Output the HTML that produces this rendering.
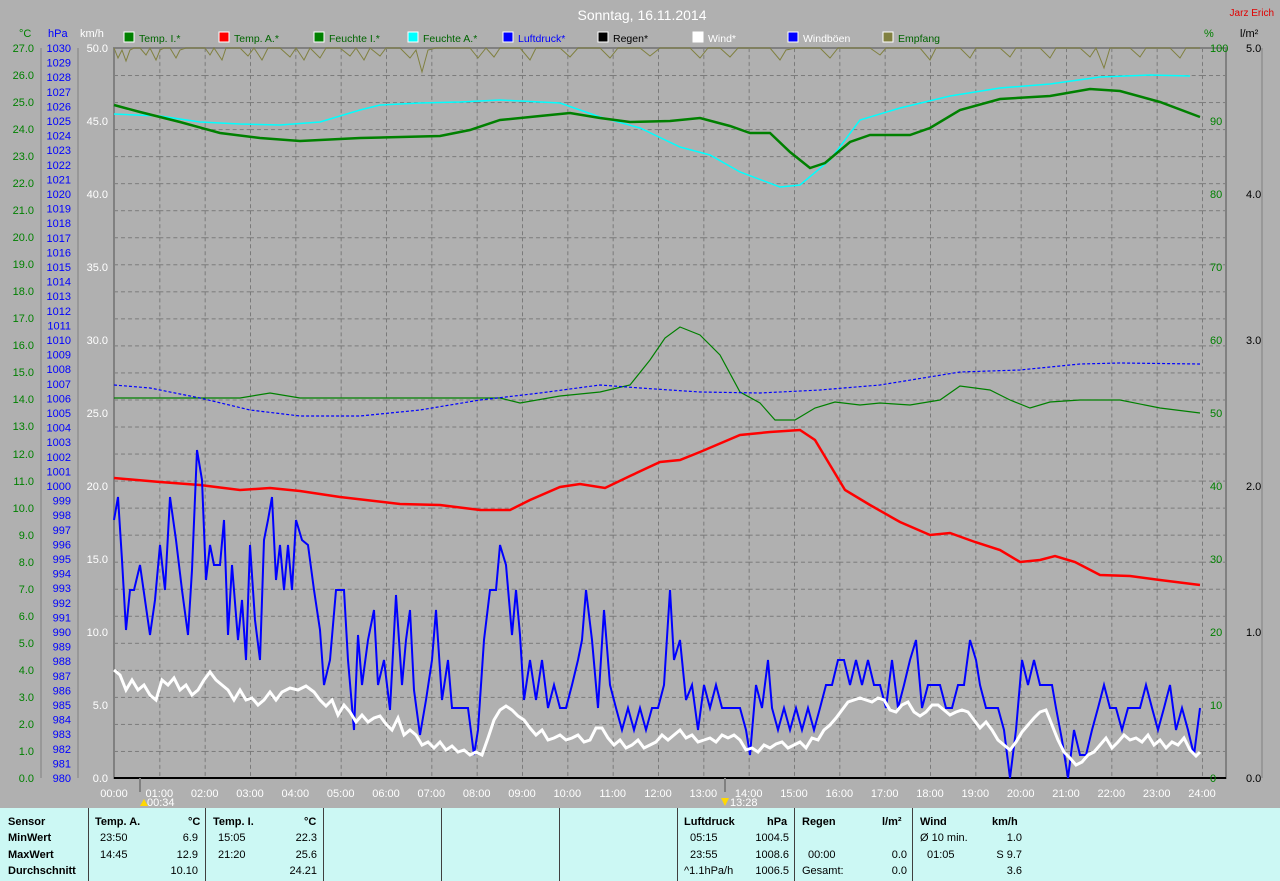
<!DOCTYPE html>
<html><head><meta charset="utf-8"><style>
html,body{margin:0;padding:0;background:#b0b0b0;}
body{width:1280px;height:881px;overflow:hidden;position:relative;font-family:"Liberation Sans",sans-serif;}
svg{position:absolute;left:0;top:0}
.tbl{position:absolute;left:0;top:808px;width:1280px;height:73px;background:#ccf8f4;font-size:11px;color:#000}
.col{position:absolute;top:0;height:73px;border-right:1px solid #404040}
.r{position:absolute;font-size:11px;white-space:nowrap}
.b{font-weight:bold}
</style></head><body>
<svg width="1280" height="808" xmlns="http://www.w3.org/2000/svg" font-family="Liberation Sans, sans-serif" font-size="11">
<defs>
<pattern id="g" x="114" y="48" width="45.333" height="27.037" patternUnits="userSpaceOnUse">
<line x1="0" y1="0.5" x2="45.333" y2="0.5" stroke="#7a7a7a" stroke-dasharray="4,3"/>
<line x1="0.5" y1="0" x2="0.5" y2="27.037" stroke="#7a7a7a" stroke-dasharray="4,3"/>
</pattern>
</defs>
<text x="642" y="20" fill="#fff" font-size="14" text-anchor="middle">Sonntag, 16.11.2014</text>
<text x="1274" y="16" fill="#e00000" font-size="10" text-anchor="end">Jarz Erich</text>
<g font-size="10.5">
<rect x="124" y="32" width="10" height="10" fill="#008000" stroke="#fff"/><text x="139" y="42" fill="#006400">Temp. I.*</text>
<rect x="219" y="32" width="10" height="10" fill="#ff0000" stroke="#fff"/><text x="234" y="42" fill="#006400">Temp. A.*</text>
<rect x="314" y="32" width="10" height="10" fill="#008000" stroke="#fff"/><text x="329" y="42" fill="#006400">Feuchte I.*</text>
<rect x="408" y="32" width="10" height="10" fill="#00ffff" stroke="#fff"/><text x="423" y="42" fill="#006400">Feuchte A.*</text>
<rect x="503" y="32" width="10" height="10" fill="#0000ff" stroke="#fff"/><text x="518" y="42" fill="#0000ff">Luftdruck*</text>
<rect x="598" y="32" width="10" height="10" fill="#000" stroke="#fff"/><text x="613" y="42" fill="#000">Regen*</text>
<rect x="693" y="32" width="10" height="10" fill="#fff" stroke="#fff"/><text x="708" y="42" fill="#fff">Wind*</text>
<rect x="788" y="32" width="10" height="10" fill="#0000ff" stroke="#fff"/><text x="803" y="42" fill="#fff">Windböen</text>
<rect x="883" y="32" width="10" height="10" fill="#808040" stroke="#fff"/><text x="898" y="42" fill="#006400">Empfang</text>
</g>
<text x="19" y="37" fill="#008000">°C</text>
<text x="48" y="37" fill="#0000ff">hPa</text>
<text x="80" y="37" fill="#fff">km/h</text>
<text x="1204" y="37" fill="#008000">%</text>
<text x="1240" y="37" fill="#000">l/m²</text>
<rect x="114" y="48" width="1112" height="730" fill="url(#g)"/>
<line x1="114" y1="47" x2="114" y2="779" stroke="#808080" stroke-width="2"/>
<line x1="1226" y1="47" x2="1226" y2="779" stroke="#808080" stroke-width="2"/>
<line x1="114" y1="48" x2="1226" y2="48" stroke="#808080" stroke-width="2"/>
<line x1="114" y1="778" x2="1226" y2="778" stroke="#000" stroke-width="2"/>
<line x1="41" y1="48" x2="41" y2="778" stroke="#808080"/>
<line x1="78" y1="48" x2="78" y2="778" stroke="#808080"/>
<line x1="1262" y1="48" x2="1262" y2="778" stroke="#808080"/>
<g fill="#008000" text-anchor="end">
<text x="34" y="52">27.0</text><text x="34" y="79">26.0</text><text x="34" y="106">25.0</text><text x="34" y="133">24.0</text><text x="34" y="160">23.0</text><text x="34" y="187">22.0</text><text x="34" y="214">21.0</text><text x="34" y="241">20.0</text><text x="34" y="268">19.0</text><text x="34" y="295">18.0</text><text x="34" y="322">17.0</text><text x="34" y="349">16.0</text><text x="34" y="376">15.0</text><text x="34" y="403">14.0</text><text x="34" y="430">13.0</text><text x="34" y="458">12.0</text><text x="34" y="485">11.0</text><text x="34" y="512">10.0</text><text x="34" y="539">9.0</text><text x="34" y="566">8.0</text><text x="34" y="593">7.0</text><text x="34" y="620">6.0</text><text x="34" y="647">5.0</text><text x="34" y="674">4.0</text><text x="34" y="701">3.0</text><text x="34" y="728">2.0</text><text x="34" y="755">1.0</text><text x="34" y="782">0.0</text>
</g>
<g fill="#0000ff" text-anchor="end">
<text x="71" y="52">1030</text><text x="71" y="66.6">1029</text><text x="71" y="81.2">1028</text><text x="71" y="95.8">1027</text><text x="71" y="110.4">1026</text><text x="71" y="125">1025</text><text x="71" y="139.6">1024</text><text x="71" y="154.2">1023</text><text x="71" y="168.8">1022</text><text x="71" y="183.4">1021</text><text x="71" y="198">1020</text><text x="71" y="212.6">1019</text><text x="71" y="227.2">1018</text><text x="71" y="241.8">1017</text><text x="71" y="256.4">1016</text><text x="71" y="271">1015</text><text x="71" y="285.6">1014</text><text x="71" y="300.2">1013</text><text x="71" y="314.8">1012</text><text x="71" y="329.4">1011</text><text x="71" y="344">1010</text><text x="71" y="358.6">1009</text><text x="71" y="373.2">1008</text><text x="71" y="387.8">1007</text><text x="71" y="402.4">1006</text><text x="71" y="417">1005</text><text x="71" y="431.6">1004</text><text x="71" y="446.2">1003</text><text x="71" y="460.8">1002</text><text x="71" y="475.4">1001</text><text x="71" y="490">1000</text><text x="71" y="504.6">999</text><text x="71" y="519.2">998</text><text x="71" y="533.8">997</text><text x="71" y="548.4">996</text><text x="71" y="563">995</text><text x="71" y="577.6">994</text><text x="71" y="592.2">993</text><text x="71" y="606.8">992</text><text x="71" y="621.4">991</text><text x="71" y="636">990</text><text x="71" y="650.6">989</text><text x="71" y="665.2">988</text><text x="71" y="679.8">987</text><text x="71" y="694.4">986</text><text x="71" y="709">985</text><text x="71" y="723.6">984</text><text x="71" y="738.2">983</text><text x="71" y="752.8">982</text><text x="71" y="767.4">981</text><text x="71" y="782">980</text>
</g>
<g fill="#fff" text-anchor="end">
<text x="108" y="52">50.0</text><text x="108" y="125">45.0</text><text x="108" y="198">40.0</text><text x="108" y="271">35.0</text><text x="108" y="344">30.0</text><text x="108" y="417">25.0</text><text x="108" y="490">20.0</text><text x="108" y="563">15.0</text><text x="108" y="636">10.0</text><text x="108" y="709">5.0</text><text x="108" y="782">0.0</text>
</g>
<g fill="#008000">
<text x="1210" y="52">100</text><text x="1210" y="125">90</text><text x="1210" y="198">80</text><text x="1210" y="271">70</text><text x="1210" y="344">60</text><text x="1210" y="417">50</text><text x="1210" y="490">40</text><text x="1210" y="563">30</text><text x="1210" y="636">20</text><text x="1210" y="709">10</text><text x="1210" y="782">0</text>
</g>
<g fill="#000">
<text x="1246" y="52">5.0</text><text x="1246" y="198">4.0</text><text x="1246" y="344">3.0</text><text x="1246" y="490">2.0</text><text x="1246" y="636">1.0</text><text x="1246" y="782">0.0</text>
</g>
<g fill="#fff" text-anchor="middle">
<text x="114" y="797">00:00</text><text x="159.3" y="797">01:00</text><text x="204.7" y="797">02:00</text><text x="250" y="797">03:00</text><text x="295.3" y="797">04:00</text><text x="340.7" y="797">05:00</text><text x="386" y="797">06:00</text><text x="431.3" y="797">07:00</text><text x="476.7" y="797">08:00</text><text x="522" y="797">09:00</text><text x="567.3" y="797">10:00</text><text x="612.7" y="797">11:00</text><text x="658" y="797">12:00</text><text x="703.3" y="797">13:00</text><text x="748.7" y="797">14:00</text><text x="794" y="797">15:00</text><text x="839.3" y="797">16:00</text><text x="884.7" y="797">17:00</text><text x="930" y="797">18:00</text><text x="975.3" y="797">19:00</text><text x="1020.7" y="797">20:00</text><text x="1066" y="797">21:00</text><text x="1111.3" y="797">22:00</text><text x="1156.7" y="797">23:00</text><text x="1202" y="797">24:00</text>
</g>
<line x1="140" y1="778" x2="140" y2="792" stroke="#808080" stroke-width="2"/>
<line x1="725" y1="778" x2="725" y2="792" stroke="#808080" stroke-width="2"/>
<polygon points="140,806 144,799 148,806" fill="#ffd800"/><text x="147" y="806" fill="#fff" font-size="11">00:34</text>
<polygon points="721,798 729,798 725,806" fill="#ffd800"/><text x="730" y="806" fill="#fff" font-size="11">13:28</text>
<polyline fill="none" stroke="#808040" points="114,48 118,58 122,50 126,61 130,50 134,48 140,48 146,55 150,48 156,60 160,50 164,48 170,48 176,58 180,50 186,48 205,48 210,55 214,48 222,60 226,48 240,48 248,56 254,48 262,60 268,48 280,48 290,57 296,48 304,60 310,48 320,58 326,48 340,48 350,56 356,48 364,60 370,48 380,56 386,48 400,48 410,58 416,50 422,72 428,50 436,48 470,48 478,58 486,48 494,57 500,48 520,48 530,60 536,48 560,48 570,57 578,48 600,48 610,58 618,48 640,48 650,56 660,48 690,48 700,58 708,48 720,48 730,57 738,48 770,48 780,60 786,50 796,48 820,48 830,58 838,48 870,48 880,55 886,48 920,48 930,60 936,48 960,48 970,58 976,48 1000,48 1010,57 1016,48 1040,48 1050,58 1056,48 1080,48 1090,57 1096,48 1104,68 1110,48 1130,48 1140,57 1146,48 1170,48 1180,58 1186,48 1200,48"/>
<polyline fill="none" stroke="#00ffff" stroke-width="1.5" points="114,114 160,116 200,122 240,124 280,125 320,122 360,110 380,105 420,103 460,102 500,100 560,103 600,117 640,128 680,147 710,155 740,172 780,187 800,185 830,160 860,120 900,108 950,96 1000,88 1050,84 1100,77 1150,75 1190,76"/>
<polyline fill="none" stroke="#008000" stroke-width="2.5" points="114,105 140,112 180,122 220,133 260,138 300,141 360,138 440,136 470,130 500,120 540,116 570,113 600,118 630,122 670,121 700,118 730,126 750,133 770,133 790,152 810,168 825,163 850,142 870,135 910,135 930,128 960,110 1000,99 1050,96 1090,89 1120,91 1160,102 1200,117"/>
<polyline fill="none" stroke="#008000" stroke-width="1.2" points="114,398 240,398 270,393 300,398 500,398 520,403 560,396 600,392 630,385 650,360 665,338 680,327 700,335 720,355 740,392 760,403 775,420 795,420 815,408 835,402 860,405 880,403 910,405 940,400 960,386 990,390 1010,400 1030,408 1050,402 1080,400 1120,400 1160,408 1200,413"/>
<polyline fill="none" stroke="#0000ff" stroke-width="1.2" stroke-dasharray="3,2" points="114,385 150,388 200,398 250,410 300,416 360,416 420,410 480,400 540,393 600,385 640,388 700,392 760,393 820,390 880,385 960,372 1020,370 1080,364 1120,363 1200,364"/>
<polyline fill="none" stroke="#ff0000" stroke-width="2.5" points="114,478 160,482 200,485 240,490 270,488 300,491 340,497 400,504 440,505 480,510 510,510 530,500 560,487 580,484 605,488 630,476 660,462 680,460 700,452 740,435 770,432 800,430 815,440 830,465 845,490 870,505 900,522 930,535 950,533 975,542 1000,550 1020,562 1040,560 1055,556 1075,562 1100,575 1130,576 1160,580 1200,585"/>
<polyline fill="none" stroke="#0000ff" stroke-width="2" points="114,520 118,497 122,560 126,630 130,590 134,590 140,565 145,600 150,635 155,600 160,545 165,590 170,497 176,540 182,590 188,635 192,570 197,450 202,480 206,580 210,545 214,565 220,565 224,520 228,635 232,565 238,640 242,600 246,660 250,545 255,620 260,660 264,540 268,520 272,497 276,580 280,545 284,590 288,545 292,590 296,520 302,540 308,545 314,590 320,630 324,685 330,660 336,590 344,590 348,660 354,730 358,635 362,685 368,640 374,610 378,685 384,660 390,710 396,595 402,685 406,640 410,610 414,690 420,735 426,700 432,660 436,610 442,700 448,660 452,708 460,708 468,708 474,755 478,730 484,640 490,590 496,590 500,545 506,565 512,635 516,590 520,635 524,700 530,660 536,700 542,660 548,708 554,685 560,708 566,708 572,685 578,660 582,640 586,590 592,640 598,708 604,610 610,685 616,708 622,730 628,708 634,730 640,708 646,730 652,708 658,708 664,685 670,590 674,660 680,640 686,700 692,685 698,730 704,685 710,708 716,685 722,708 728,708 734,708 740,708 746,730 750,755 756,685 762,708 768,660 772,708 778,730 784,708 790,730 796,708 802,730 808,708 814,730 820,708 826,685 832,685 838,660 844,660 850,685 856,660 862,685 868,660 874,685 880,685 886,708 892,660 898,708 904,685 910,660 916,640 922,708 928,685 934,685 940,685 946,708 952,708 958,685 964,685 970,640 976,660 980,685 986,708 992,708 998,708 1004,730 1010,778 1016,730 1022,660 1028,685 1034,660 1040,685 1046,685 1052,685 1056,708 1062,740 1068,778 1074,730 1080,755 1086,755 1092,730 1098,708 1104,685 1110,708 1116,708 1122,730 1128,708 1134,708 1140,708 1146,685 1152,708 1158,730 1164,708 1170,685 1176,730 1182,708 1188,730 1194,755 1200,708"/>
<polyline fill="none" stroke="#fff" stroke-width="3" points="114,670 120,675 126,690 132,680 138,690 144,685 150,695 156,700 162,680 168,685 174,678 180,690 186,685 192,695 198,690 204,680 210,672 216,680 222,685 228,690 234,700 240,690 246,700 252,698 258,705 264,700 270,692 276,700 282,692 290,688 298,690 306,686 314,692 320,700 326,706 332,700 338,715 344,705 350,712 356,722 362,715 368,722 374,718 380,716 386,724 392,730 398,718 404,735 410,730 416,735 422,745 428,742 434,748 440,742 446,750 452,746 458,752 464,750 470,755 476,752 482,755 488,738 494,720 500,710 506,706 512,710 518,716 524,720 530,728 536,735 542,730 548,740 554,738 560,735 566,740 572,738 578,735 584,742 590,740 596,728 602,728 608,738 614,745 620,740 626,748 632,745 638,740 644,748 650,745 656,742 662,735 668,740 674,735 680,730 686,738 692,735 698,742 704,740 710,738 716,742 722,735 728,738 734,735 740,740 746,750 752,748 758,752 764,745 770,748 776,744 782,742 788,748 794,745 800,742 806,748 812,738 818,740 824,730 830,725 836,718 842,710 848,702 854,700 860,698 866,700 872,702 878,698 884,700 890,710 896,712 902,705 908,702 914,712 920,716 926,712 932,705 938,705 944,710 950,715 956,712 962,710 968,712 974,720 980,728 986,722 992,730 998,740 1004,745 1010,750 1016,742 1022,732 1028,725 1034,718 1040,712 1046,710 1052,725 1058,740 1064,752 1070,758 1076,765 1082,762 1088,755 1094,752 1100,745 1106,738 1112,748 1118,742 1124,735 1130,740 1136,738 1142,742 1148,735 1154,745 1160,740 1166,748 1172,742 1178,745 1184,738 1190,750 1196,756 1200,752"/>
</svg>
<div class="tbl">
<div class="col" style="left:0;width:88px"></div>
<div class="col" style="left:88px;width:117px"></div>
<div class="col" style="left:205px;width:118px"></div>
<div class="col" style="left:323px;width:118px"></div>
<div class="col" style="left:441px;width:118px"></div>
<div class="col" style="left:559px;width:118px"></div>
<div class="col" style="left:677px;width:117px"></div>
<div class="col" style="left:794px;width:118px"></div>
<div class="col" style="left:912px;width:118px;border-right:none"></div>
<div class="r b" style="left:8px;top:8px">Sensor</div>
<div class="r b" style="left:8px;top:24px">MinWert</div>
<div class="r b" style="left:8px;top:41px">MaxWert</div>
<div class="r b" style="left:8px;top:57px">Durchschnitt</div>
<div class="r b" style="left:95px;top:8px">Temp. A.</div><div class="r b" style="left:188px;top:8px">°C</div>
<div class="r" style="left:100px;top:24px">23:50</div><div class="r" style="right:1082px;top:24px">6.9</div>
<div class="r" style="left:100px;top:41px">14:45</div><div class="r" style="right:1082px;top:41px">12.9</div>
<div class="r" style="right:1082px;top:57px">10.10</div>
<div class="r b" style="left:213px;top:8px">Temp. I.</div><div class="r b" style="left:304px;top:8px">°C</div>
<div class="r" style="left:218px;top:24px">15:05</div><div class="r" style="right:963px;top:24px">22.3</div>
<div class="r" style="left:218px;top:41px">21:20</div><div class="r" style="right:963px;top:41px">25.6</div>
<div class="r" style="right:963px;top:57px">24.21</div>
<div class="r b" style="left:684px;top:8px">Luftdruck</div><div class="r b" style="left:767px;top:8px">hPa</div>
<div class="r" style="left:690px;top:24px">05:15</div><div class="r" style="right:491px;top:24px">1004.5</div>
<div class="r" style="left:690px;top:41px">23:55</div><div class="r" style="right:491px;top:41px">1008.6</div>
<div class="r" style="left:684px;top:57px">^1.1hPa/h</div><div class="r" style="right:491px;top:57px">1006.5</div>
<div class="r b" style="left:802px;top:8px">Regen</div><div class="r b" style="left:882px;top:8px">l/m²</div>
<div class="r" style="left:808px;top:41px">00:00</div><div class="r" style="right:373px;top:41px">0.0</div>
<div class="r" style="left:802px;top:57px">Gesamt:</div><div class="r" style="right:373px;top:57px">0.0</div>
<div class="r b" style="left:920px;top:8px">Wind</div><div class="r b" style="left:992px;top:8px">km/h</div>
<div class="r" style="left:920px;top:24px">Ø 10 min.</div><div class="r" style="right:258px;top:24px">1.0</div>
<div class="r" style="left:927px;top:41px">01:05</div><div class="r" style="right:258px;top:41px">S 9.7</div>
<div class="r" style="right:258px;top:57px">3.6</div>
</div>
</body></html>
